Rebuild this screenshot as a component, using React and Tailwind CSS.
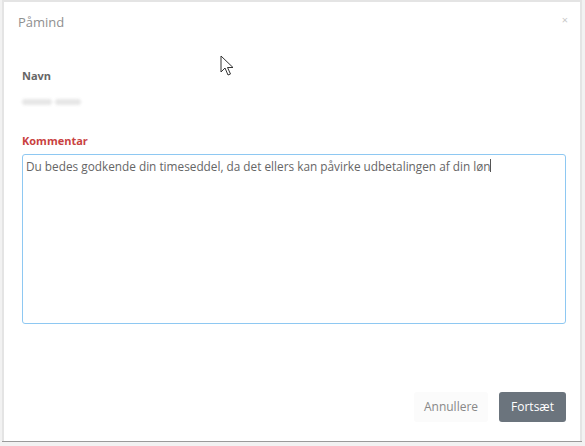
import { useState } from "react";

function Pointer() {
  return (
    <svg
      className="absolute left-[220px] top-[55px]"
      width="14"
      height="22"
      viewBox="0 0 14 22"
    >
      <path
        d="M1 1 L1 17 L5 13 L8 20 L10.5 19 L7.5 12.5 L13 12.5 Z"
        fill="#fff"
        stroke="#333"
        strokeWidth="1"
        strokeLinejoin="round"
      />
    </svg>
  );
}

export default function App() {
  const [comment, setComment] = useState(
    "Du bedes godkende din timeseddel, da det ellers kan påvirke udbetalingen af din løn"
  );

  return (
    <div className="relative h-[446px] w-[585px] bg-[#f2f2f2] font-['Open_Sans',sans-serif]">
      <div className="ml-[2px] flex h-[441px] w-[580px] flex-col border-2 border-b-0 border-[#e4e4e4] bg-white">
        <div className="flex h-[40px] items-start justify-between pl-[14px] pr-[12px] pt-[11px]">
          <span className="text-[13px] text-[#8f8f8f]">Påmind</span>
          <span className="text-[11px] leading-[14px] text-[#c8c8c8]">×</span>
        </div>

        <div className="flex flex-1 flex-col pl-[18px] pr-[14px] pt-[26px]">
          <label className="text-[11px] font-bold text-[#666]">Navn</label>
          <div className="mt-[12px] flex h-[10px] items-center gap-[3px]">
            <span className="h-[6px] w-[30px] rounded-full bg-[#e6e6e6] blur-[1.5px]" />
            <span className="h-[6px] w-[26px] rounded-full bg-[#e6e6e6] blur-[1.5px]" />
          </div>

          <label className="mt-[26px] text-[11px] font-bold text-[#c9423f]">
            Kommentar
          </label>
          <div className="relative mt-[5px]">
            <textarea
              value={comment}
              onChange={(e) => setComment(e.target.value)}
              className="block h-[170px] w-full resize-none rounded-[3px] border-[1.5px] border-[#8ec8f2] px-[3px] py-[3px] text-[11.8px] leading-[16px] text-[#666] outline-none"
            />
            {/* caret after the text */}
            <span className="absolute left-[468px] top-[5px] h-[13px] w-px bg-[#555]" />
          </div>

          <div className="mt-auto mb-[19px] flex justify-end gap-[11px]">
            <button className="h-[30px] w-[74px] rounded-[3px] bg-[#fbfbfb] text-[12px] text-[#888]">
              Annullere
            </button>
            <button className="h-[30px] w-[67px] rounded-[3px] bg-[#6b747d] text-[12px] text-white">
              Fortsæt
            </button>
          </div>
        </div>
      </div>
      <div className="ml-[2px] h-px w-[580px] bg-[#9a9a9a]" />
      <Pointer />
    </div>
  );
}
